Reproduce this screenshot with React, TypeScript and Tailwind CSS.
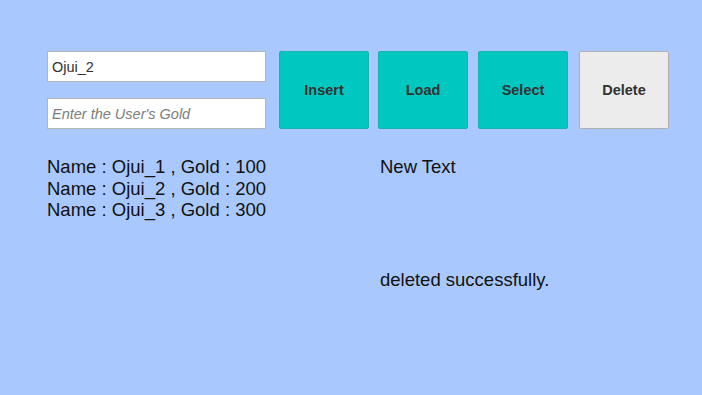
import { useState } from 'react';

// Simple user store panel: two inputs, four action buttons, a list and a status text
export default function App() {
  const [name, setName] = useState('Ojui_2');
  const [gold, setGold] = useState('');

  const users = [
    { name: 'Ojui_1', gold: 100 },
    { name: 'Ojui_2', gold: 200 },
    { name: 'Ojui_3', gold: 300 },
  ];

  return (
    <div
      className="w-[702px] h-[395px] bg-[#a9c9fe] pl-[47px] pt-[51px] text-[#111]"
      style={{ fontFamily: '"Liberation Sans", Arial, sans-serif' }}
    >
      {/* TOP: inputs + buttons */}
      <div className="flex items-start">
        <div className="flex flex-col gap-[16px] w-[219px]">
          <input
            value={name}
            onChange={(e) => setName(e.target.value)}
            className="h-[31px] w-full bg-white border border-[#b4b4b4] px-[4px] text-[14.5px] text-[#323232] outline-none"
          />
          <input
            value={gold}
            onChange={(e) => setGold(e.target.value)}
            placeholder="Enter the User's Gold"
            className="h-[31px] w-full bg-white border border-[#b4b4b4] px-[4px] text-[14.5px] text-[#323232] outline-none placeholder:italic placeholder:text-[#7d7d7d]"
          />
        </div>

        <button className="ml-[13px] w-[90px] h-[78px] pt-[2px] bg-[#00c8c0] border border-[#19b0b0] rounded-[2px] font-bold text-[14.5px] text-[#323232]">
          Insert
        </button>
        <button className="ml-[9px] w-[90px] h-[78px] pt-[2px] bg-[#00c8c0] border border-[#19b0b0] rounded-[2px] font-bold text-[14.5px] text-[#323232]">
          Load
        </button>
        <button className="ml-[10px] w-[90px] h-[78px] pt-[2px] bg-[#00c8c0] border border-[#19b0b0] rounded-[2px] font-bold text-[14.5px] text-[#323232]">
          Select
        </button>
        <button className="ml-[11px] w-[90px] h-[78px] pt-[2px] bg-[#ececec] border border-[#b0b0b0] rounded-[2px] font-bold text-[14.5px] text-[#323232]">
          Delete
        </button>
      </div>

      {/* BOTTOM: user list + status */}
      <div className="flex mt-[27px] text-[18.5px] leading-[21.7px]">
        <div className="w-[333px]">
          {users.map((u) => (
            <div key={u.name}>
              Name : {u.name} , Gold : {u.gold}
            </div>
          ))}
        </div>
        <div>
          <div>New Text</div>
          <div className="mt-[91px]">deleted successfully.</div>
        </div>
      </div>
    </div>
  );
}
